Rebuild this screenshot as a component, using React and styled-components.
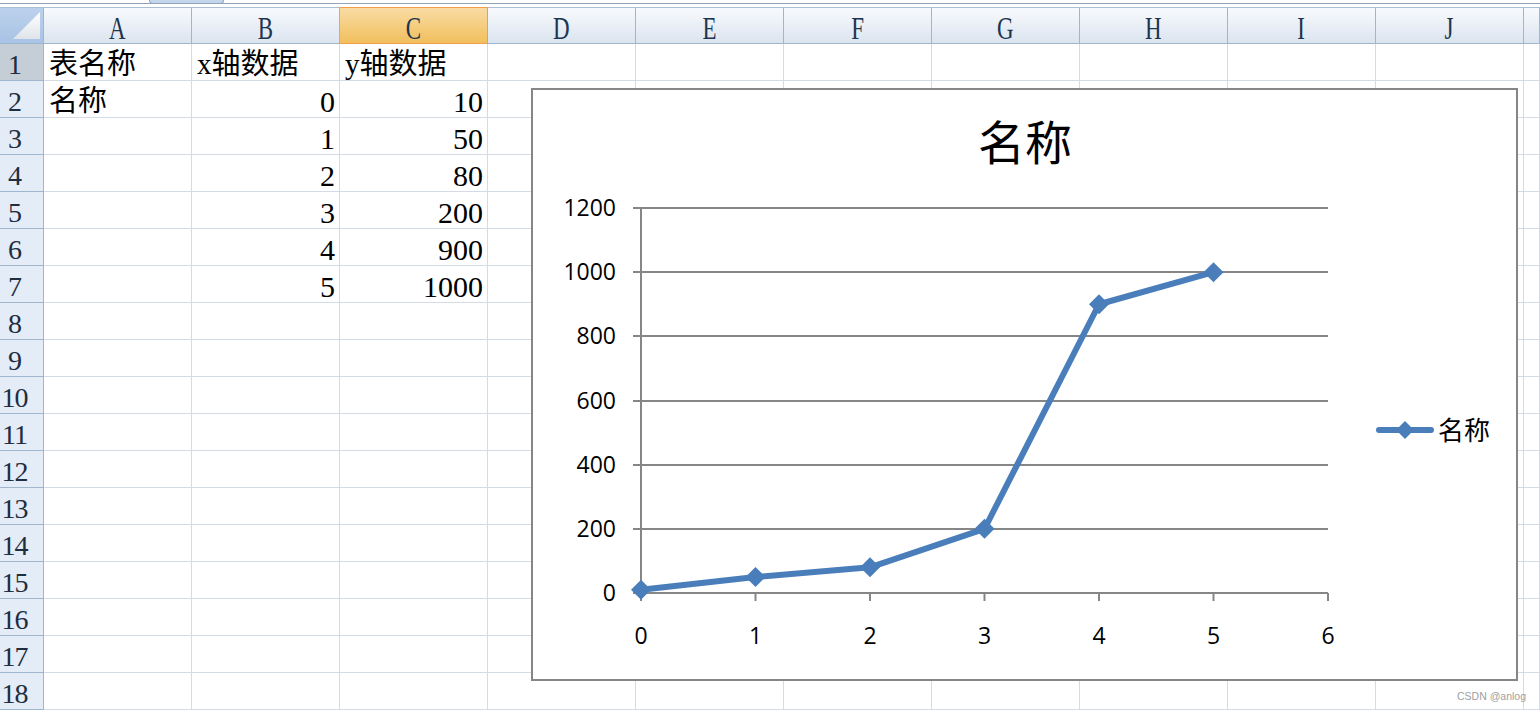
import styled, { createGlobalStyle } from 'styled-components'

const GlobalStyle = createGlobalStyle`
  html, body {
    margin: 0;
    padding: 0;
    background: #ffffff;
    overflow: hidden;
  }
`

const COLS = ['A', 'B', 'C', 'D', 'E', 'F', 'G', 'H', 'I', 'J', '']
const ROWS = 18

const DATA = {
  1: ['表名称', 'x轴数据', 'y轴数据'],
  2: ['名称', 0, 10],
  3: ['', 1, 50],
  4: ['', 2, 80],
  5: ['', 3, 200],
  6: ['', 4, 900],
  7: ['', 5, 1000],
}

const Page = styled.div`
  position: relative;
  width: 1540px;
  height: 711px;
  overflow: hidden;
  background: #ffffff;
`

// thin ribbon edge above the sheet, with the little scroll tab
const TopStrip = styled.div`
  display: flex;
  align-items: flex-start;
  height: 7px;
  padding-left: 149px;
  background: linear-gradient(
    to bottom,
    #ffffff 0,
    #ffffff 3px,
    #8fa3bb 3px,
    #8fa3bb 4px,
    #ffffff 4px
  );
`

const Tab = styled.div`
  width: 73px;
  height: 3px;
  background: #c6d6ea;
  border: 1px solid #8fa3bb;
  border-top: none;
  border-radius: 0 0 4px 4px;
`

const Sheet = styled.div`
  display: grid;
  grid-template-columns: 44px repeat(10, 148px) 16px;
  grid-auto-rows: 37px;
  font-family: 'Liberation Serif', 'Noto Sans CJK SC', serif;
`

const Corner = styled.div`
  box-sizing: border-box;
  background: linear-gradient(#bcd1ec, #a9c3e6);
  border-right: 1px solid #9eb6ce;
  border-bottom: 1px solid #9eb6ce;
  border-top: 1px solid #abbdd3;
  svg {
    display: block;
  }
`

const ColHead = styled.div`
  box-sizing: border-box;
  display: flex;
  align-items: center;
  justify-content: center;
  border-top: 1px solid ${(p) => (p.$active ? '#f29d49' : '#abbdd3')};
  border-right: 1px solid ${(p) => (p.$active ? '#f29d49' : '#9eb6ce')};
  border-bottom: 1px solid ${(p) => (p.$active ? '#f29d49' : '#9eb6ce')};
  background: ${(p) =>
    p.$active
      ? 'linear-gradient(#f9dca4, #f1bf5d)'
      : 'linear-gradient(#f8fafd, #dbe4ef)'};
  color: #1c3550;
  font-size: 31px;
  span {
    display: inline-block;
    transform: scaleX(0.74);
    line-height: 1;
    padding-top: 6px;
  }
`

const RowHead = styled.div`
  box-sizing: border-box;
  display: flex;
  align-items: flex-end;
  justify-content: center;
  padding: 0 14px 0 0;
  background: ${(p) => (p.$active ? '#c5cdd7' : '#e4ecf7')};
  border-right: 1px solid #9eb6ce;
  border-bottom: 1px solid #9eb6ce;
  color: #1e2d40;
  font-size: 28px;
  line-height: 31px;
  letter-spacing: -1px;
`

const Cell = styled.div`
  box-sizing: border-box;
  display: flex;
  align-items: flex-end;
  justify-content: ${(p) => (p.$num ? 'flex-end' : 'flex-start')};
  padding: 0 ${(p) => (p.$num ? '4px' : '0')} 0 ${(p) => (p.$num ? '0' : '5px')};
  border-right: 1px solid #d4dbe6;
  border-bottom: 1px solid #d4dbe6;
  color: #000000;
  font-size: ${(p) => (p.$num ? '30px' : '29px')};
  line-height: ${(p) => (p.$num ? '30px' : '31px')};
  white-space: nowrap;
`

const ChartBox = styled.div`
  position: absolute;
  left: 531px;
  top: 88px;
  width: 987px;
  height: 593px;
  box-sizing: border-box;
  border: 2px solid #868686;
  background: #ffffff;
  svg {
    display: block;
  }
`

const Watermark = styled.div`
  position: absolute;
  right: 14px;
  bottom: 9px;
  font-family: 'Liberation Sans', Arial, sans-serif;
  font-size: 10.5px;
  color: #a0a0a0;
`

const X0 = 641
const XSTEP = 114.5
const Y0 = 593
const YSCALE = 385 / 1200
const values = [10, 50, 80, 200, 900, 1000]
const points = values.map((v, i) => [X0 + i * XSTEP, Y0 - v * YSCALE])

const Diamond = ({ x, y, r = 10 }) => (
  <polygon
    points={`${x},${y - r} ${x + r},${y} ${x},${y + r} ${x - r},${y}`}
    fill="#4a7ebb"
  />
)

const Chart = () => {
  const ticksY = [0, 200, 400, 600, 800, 1000, 1200]
  return (
    <ChartBox>
      <svg width="983" height="589" viewBox="533 90 983 589">
        <text
          x="1025"
          y="160"
          textAnchor="middle"
          fontFamily="'Noto Sans CJK SC', sans-serif"
          fontSize="47"
          fill="#000"
        >
          名称
        </text>
        {ticksY.map((t) => {
          const y = Math.round(Y0 - t * YSCALE)
          return (
            <g key={t}>
              <line x1="633" x2="1328" y1={y} y2={y} stroke="#868686" strokeWidth="2" />
              <text
                x="616"
                y={y + 8}
                textAnchor="end"
                fontFamily="'Open Sans', sans-serif"
                fontSize="23"
                fill="#000"
              >
                {t}
              </text>
            </g>
          )
        })}
        <line x1={X0} x2={X0} y1="208" y2="593" stroke="#868686" strokeWidth="2" />
        {[0, 1, 2, 3, 4, 5, 6].map((i) => {
          const x = X0 + i * XSTEP
          return (
            <g key={i}>
              <line x1={x} x2={x} y1="593" y2="601" stroke="#868686" strokeWidth="2" />
              <text
                x={x}
                y="644"
                textAnchor="middle"
                fontFamily="'Open Sans', sans-serif"
                fontSize="23"
                fill="#000"
              >
                {i}
              </text>
            </g>
          )
        })}
        <polyline
          points={points.map((p) => p.join(',')).join(' ')}
          fill="none"
          stroke="#4a7ebb"
          strokeWidth="6"
          strokeLinejoin="round"
          strokeLinecap="round"
        />
        {points.map(([x, y], i) => (
          <Diamond key={i} x={x} y={y} />
        ))}
        <line x1="1379" x2="1431" y1="430" y2="430" stroke="#4a7ebb" strokeWidth="6" strokeLinecap="round" />
        <Diamond x={1405} y={430} r={9} />
        <text
          x="1438"
          y="440"
          fontFamily="'Noto Sans CJK SC', sans-serif"
          fontSize="26"
          fill="#000"
        >
          名称
        </text>
      </svg>
    </ChartBox>
  )
}

const App = () => {
  const cells = []
  cells.push(
    <Corner key="corner">
      <svg width="43" height="35" viewBox="0 0 43 35">
        <defs>
          <linearGradient id="tri" x1="0" y1="0" x2="0" y2="1">
            <stop offset="0" stopColor="#ffffff" />
            <stop offset="1" stopColor="#dfe3ea" />
          </linearGradient>
        </defs>
        <polygon points="40,4 40,31 13,31" fill="url(#tri)" />
      </svg>
    </Corner>,
  )
  COLS.forEach((c, i) => {
    cells.push(
      <ColHead key={`h${i}`} $active={c === 'C'}>
        <span>{c}</span>
      </ColHead>,
    )
  })
  for (let r = 1; r <= ROWS; r++) {
    cells.push(
      <RowHead key={`r${r}`} $active={r === 1}>
        {r}
      </RowHead>,
    )
    const row = DATA[r] || []
    COLS.forEach((c, i) => {
      const v = row[i]
      const isNum = typeof v === 'number'
      cells.push(
        <Cell key={`c${r}-${i}`} $num={isNum}>
          {v === undefined ? '' : v}
        </Cell>,
      )
    })
  }

  return (
    <>
      <GlobalStyle />
      <Page>
        <TopStrip>
          <Tab />
        </TopStrip>
        <Sheet>{cells}</Sheet>
        <Chart />
        <Watermark>CSDN @anlog</Watermark>
      </Page>
    </>
  )
}

export default App
